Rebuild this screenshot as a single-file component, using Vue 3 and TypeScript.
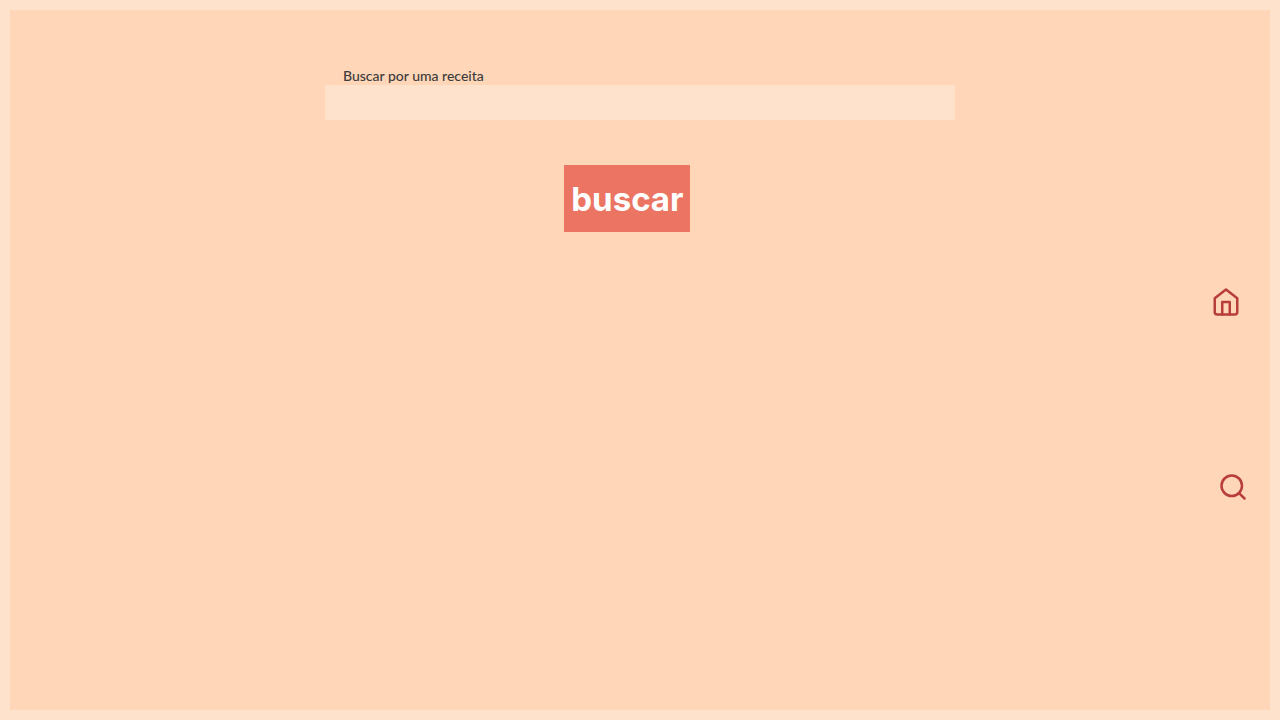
<script setup lang="ts">
import { ref } from 'vue'

const query = ref('')
</script>

<template>
  <div class="page">
    <form class="search" @submit.prevent>
      <label class="search-label" for="recipe">Buscar por uma receita</label>
      <input id="recipe" v-model="query" class="search-input" type="text" />
      <button class="search-button" type="submit">buscar</button>
    </form>
    <nav class="menu">
      <a class="menu-link home" href="#home" aria-label="Home">
        <svg class="icon" viewBox="0 0 24 24">
          <path d="M3 9l9-7 9 7v11a2 2 0 0 1-2 2H5a2 2 0 0 1-2-2z" />
          <polyline points="9 22 9 12 15 12 15 22" />
        </svg>
      </a>
      <a class="menu-link find" href="#search" aria-label="Buscar">
        <svg class="icon" viewBox="0 0 24 24">
          <circle cx="11" cy="11" r="8.2" />
          <line x1="21.2" y1="21.2" x2="16.85" y2="16.85" />
        </svg>
      </a>
    </nav>
  </div>
</template>

<style>
body {
  margin: 0;
  background: #ffe2cc;
}
</style>

<style scoped>
.page {
  box-sizing: border-box;
  min-height: 100vh;
  display: grid;
  grid-template-columns: minmax(0, 1fr);
  border: 10px solid #ffe2cc;
  background: #ffd6b7;
}

.search,
.menu {
  grid-area: 1 / 1;
}

.search {
  display: flex;
  flex-direction: column;
  align-items: flex-start;
  padding-top: 56px;
}

.search-label {
  margin-left: 25%;
  padding-left: 18px;
  font-family: Lato, "Open Sans", sans-serif;
  font-size: 14px;
  font-weight: 500;
  line-height: 19px;
  color: #3c3c3c;
}

.search-input {
  box-sizing: border-box;
  width: 50%;
  height: 35px;
  margin: 0 0 45px 25%;
  padding: 0 18px;
  border: 1px solid #ffe0c8;
  background: #ffe2cc;
  font-family: Lato, "Open Sans", sans-serif;
  font-size: 14px;
  color: #3c3c3c;
  outline: none;
}

.search-button {
  width: 10%;
  min-width: 126px;
  height: 67px;
  margin: 0 0 0 44%;
  padding: 0;
  border: 0;
  background: #eb7463;
  color: #fff;
  font-family: Inter, sans-serif;
  font-size: 33px;
  font-weight: 700;
  cursor: pointer;
}

.menu {
  position: relative;
  justify-self: end;
  align-self: start;
  display: flex;
  flex-direction: column;
  gap: 155px;
  width: 37px;
  padding: 277px 22px 0 0;
}

.menu-link {
  display: block;
  width: 30px;
  height: 30px;
}

.find {
  align-self: flex-end;
}

.icon {
  display: block;
  width: 100%;
  height: 100%;
  fill: none;
  stroke: #b83d3d;
  stroke-width: 2;
  stroke-linecap: round;
  stroke-linejoin: round;
}
</style>
